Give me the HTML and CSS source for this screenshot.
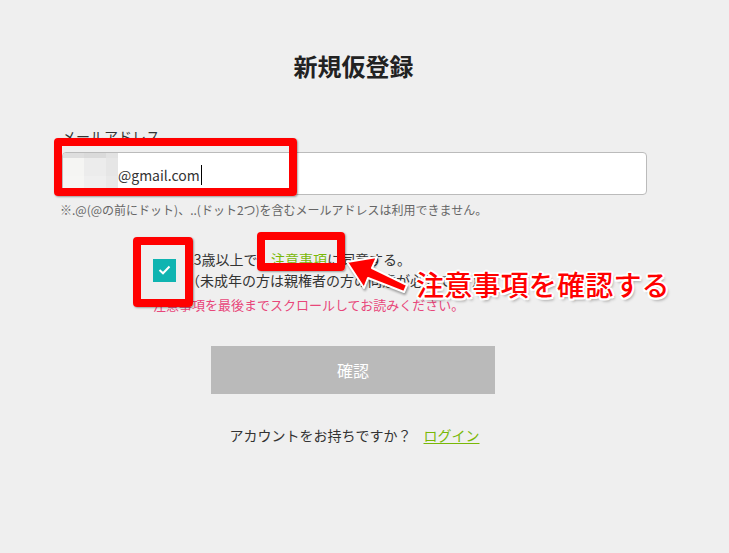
FILE: index.html
```html
<!DOCTYPE html>
<html lang="ja">
<head>
    <meta charset="UTF-8">
    <meta name="viewport" content="width=device-width, initial-scale=1.0">
    <title>新規仮登録</title>
    <link rel="stylesheet" href="styles.css">
</head>
<body>
    <main class="signup">
        <h1 class="signup-title">新規仮登録</h1>

        <label class="field-label" for="email">メールアドレス</label>
        <div class="email-input" id="email">
            <span class="mosaic">
                <i class="m1"></i><i class="m2"></i><i class="m3"></i>
                <i class="m4"></i><i class="m5"></i><i class="m6"></i>
                <i class="m7"></i><i class="m8"></i><i class="m9"></i>
            </span>
            <span class="email-value">@gmail.com</span><span class="caret"></span>
        </div>
        <p class="field-note">※.@(@の前にドット)、..(ドット2つ)を含むメールアドレスは利用できません。</p>

        <div class="agree">
            <div class="agree-row">
                <span class="checkbox">
                    <svg width="13" height="10" viewBox="0 0 13 10"><polyline points="1.5,5 5,8.3 11.5,1.5" fill="none" stroke="#fff" stroke-width="2"/></svg>
                </span>
                <p class="agree-text">13歳以上で、<a href="#" class="link">注意事項</a>に同意する。<br>（未成年の方は親権者の方の同意が必要です。）</p>
            </div>
            <p class="agree-warn">注意事項を最後までスクロールしてお読みください。</p>
        </div>

        <button type="button" class="btn-confirm">確認</button>

        <p class="login-line">アカウントをお持ちですか？<a href="#" class="link login-link">ログイン</a></p>
    </main>

    <!-- 注釈 -->
    <div class="mark mark-email"></div>
    <div class="mark mark-check"></div>
    <div class="mark mark-link"></div>
    <svg class="mark-arrow" width="729" height="553" viewBox="0 0 729 553">
        <polygon points="347,262 377,257 372,268 407,285 404,292 368,278 364,288"
                 fill="#ff0000" stroke="#fff" stroke-width="2" stroke-linejoin="round"/>
    </svg>
    <div class="mark-caption">注意事項を確認する</div>
</body>
</html>
```

FILE: styles.css
```css
* {
    margin: 0;
    padding: 0;
    box-sizing: border-box;
}

body {
    background: #efefef;
    font-family: "Noto Sans CJK JP", "Noto Sans", sans-serif;
    color: #333;
    width: 729px;
    height: 553px;
    position: relative;
    overflow: hidden;
}

.signup {
    width: 585px;
    margin-left: 62px;
    padding-top: 50px;
    display: flex;
    flex-direction: column;
}

.signup-title {
    font-size: 24px;
    line-height: 32px;
    font-weight: 700;
    color: #222;
    text-align: center;
    margin-right: 2px;
}

.field-label {
    margin-top: 44px;
    font-size: 14px;
    line-height: 20px;
    color: #333;
}

.email-input {
    margin-top: 6px;
    height: 43px;
    background: #fff;
    border: 1px solid #bbb;
    border-radius: 4px;
    display: flex;
    align-items: center;
    overflow: hidden;
}

.mosaic {
    display: grid;
    grid-template-columns: 22px 22px 12px;
    grid-template-rows: 6px 18px 19px;
    align-self: stretch;
    margin: -1px 0 -1px -1px;
}

.mosaic i { display: block; }
.m1 { background: #dedede; }
.m2 { background: #dadada; }
.m3 { background: #e2e2e2; }
.m4 { background: #f5f5f3; }
.m5 { background: #ececec; }
.m6 { background: #e6e6e6; }
.m7 { background: #f6f6f4; }
.m8 { background: #efefef; }
.m9 { background: #e9e9e9; }

.email-value {
    font-size: 14px;
    color: #333;
    margin-top: 2px;
}

.caret {
    width: 1px;
    height: 20px;
    background: #000;
    margin-left: 1px;
    margin-top: 2px;
}

.field-note {
    margin-top: 6px;
    font-size: 12px;
    line-height: 18px;
    color: #666;
    margin-left: -2px;
}

.agree {
    margin-top: 30px;
    margin-left: 91px;
}

.agree-row {
    display: flex;
    align-items: center;
    gap: 10px;
}

.checkbox {
    width: 23px;
    height: 23px;
    background: #0fb4b1;
    display: flex;
    align-items: center;
    justify-content: center;
}

.agree-text {
    font-size: 14px;
    line-height: 21px;
    color: #333;
}

.link {
    color: #79b806;
    text-decoration: underline;
    text-underline-offset: 2px;
}

.agree-warn {
    margin-top: 4px;
    font-size: 13px;
    line-height: 20px;
    color: #e8467a;
}

.btn-confirm {
    align-self: center;
    margin-top: 31px;
    margin-right: 3px;
    width: 284px;
    height: 48px;
    border: none;
    background: #bababa;
    color: #fff;
    font-family: inherit;
    font-size: 16px;
}

.login-line {
    margin-top: 31px;
    text-align: center;
    font-size: 14px;
    line-height: 20px;
    color: #333;
}

.login-link {
    margin-left: 12px;
}

/* 注釈（赤枠・矢印） */
.mark {
    position: absolute;
    border: 8px solid #ff0000;
    border-radius: 4px;
    box-shadow: 1px 1px 2px rgba(0, 0, 0, 0.35);
}

.mark-email {
    left: 54px;
    top: 138px;
    width: 243px;
    height: 58px;
}

.mark-check {
    left: 133px;
    top: 237px;
    width: 60px;
    height: 70px;
}

.mark-link {
    left: 257px;
    top: 232px;
    width: 88px;
    height: 39px;
}

.mark-arrow {
    position: absolute;
    left: 0;
    top: 0;
    filter: drop-shadow(1px 2px 1px rgba(0, 0, 0, 0.35));
}

.mark-caption {
    position: absolute;
    left: 416px;
    top: 268px;
    font-size: 28px;
    line-height: 32px;
    font-weight: 500;
    color: #ff0000;
    letter-spacing: 0.2px;
    text-shadow:
        -2px 0 0 #fff, 2px 0 0 #fff, 0 -2px 0 #fff, 0 2px 0 #fff,
        -1.5px -1.5px 0 #fff, 1.5px -1.5px 0 #fff, -1.5px 1.5px 0 #fff, 1.5px 1.5px 0 #fff,
        2px 3px 3px rgba(0, 0, 0, 0.35);
}
```
